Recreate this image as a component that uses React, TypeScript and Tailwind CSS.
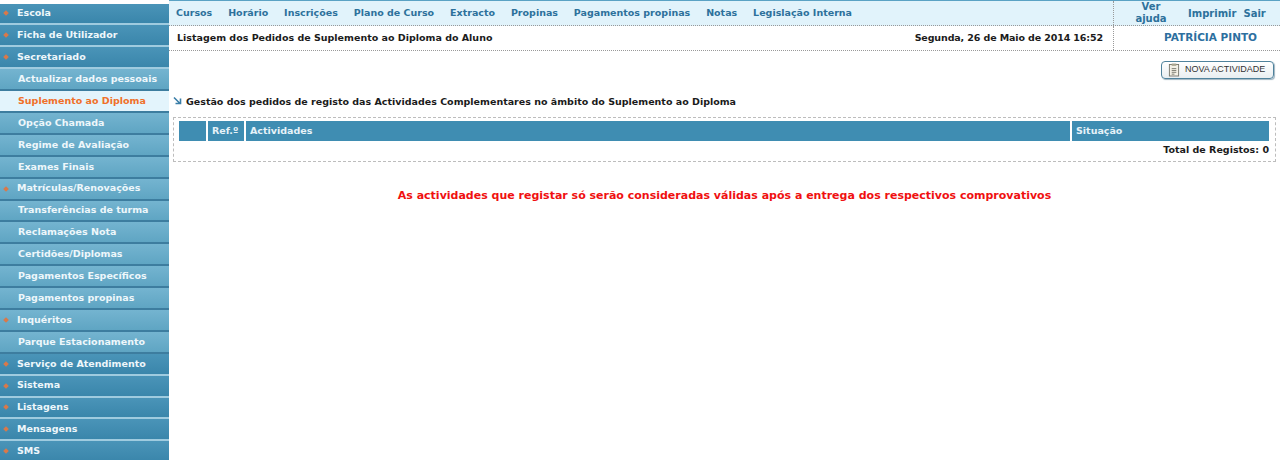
const MENU = [
  { label: "Escola", kind: "top" },
  { label: "Ficha de Utilizador", kind: "top" },
  { label: "Secretariado", kind: "top" },
  { label: "Actualizar dados pessoais", kind: "sub" },
  { label: "Suplemento ao Diploma", kind: "active" },
  { label: "Opção Chamada", kind: "sub" },
  { label: "Regime de Avaliação", kind: "sub" },
  { label: "Exames Finais", kind: "sub" },
  { label: "Matrículas/Renovações", kind: "subarrow" },
  { label: "Transferências de turma", kind: "sub" },
  { label: "Reclamações Nota", kind: "sub" },
  { label: "Certidões/Diplomas", kind: "sub" },
  { label: "Pagamentos Específicos", kind: "sub" },
  { label: "Pagamentos propinas", kind: "sub" },
  { label: "Inquéritos", kind: "subarrow" },
  { label: "Parque Estacionamento", kind: "sub" },
  { label: "Serviço de Atendimento", kind: "top" },
  { label: "Sistema", kind: "top" },
  { label: "Listagens", kind: "top" },
  { label: "Mensagens", kind: "top" },
  { label: "SMS", kind: "top" },
];

const NAV = ["Cursos", "Horário", "Inscrições", "Plano de Curso", "Extracto", "Propinas", "Pagamentos propinas", "Notas", "Legislação Interna"];

function MenuRow({ label, kind }: { label: string; kind: string }) {
  if (kind === "active") {
    return (
      <div className="flex h-[21.9px] items-center border-b-2 border-[#3d7d9f] bg-[#e3f4fc] pl-[18px] text-[#f0702a]">
        {label}
      </div>
    );
  }
  const sub = kind !== "top";
  return (
    <div
      className={
        sub
          ? "flex h-[21.9px] items-center border-b-2 border-[#3d7d9f] bg-gradient-to-b from-[#74b4d0] to-[#5fa5c3] text-[#eef7fb]"
          : "flex h-[21.9px] items-center border-b-2 border-[#9fcbdf] bg-gradient-to-b from-[#4a94b8] to-[#3a86ab] text-[#eef7fb]"
      }
    >
      {kind === "sub" ? (
        <span className="pl-[18px]">{label}</span>
      ) : (
        <>
          <span className="ml-[4px] mr-[9px] h-[4px] w-[4px] shrink-0 rotate-45 bg-[#d9794a]" />
          <span>{label}</span>
        </>
      )}
    </div>
  );
}

export default function App() {
  return (
    <div className="flex h-[460px] w-[1280px] overflow-hidden bg-white font-['DejaVu_Sans',sans-serif] text-[9.5px] font-bold text-[#1b1b1b]">
      <aside className="w-[169px] shrink-0 bg-white pt-[3.5px]">
        {MENU.map((m) => (
          <MenuRow key={m.label} label={m.label} kind={m.kind} />
        ))}
      </aside>

      <main className="min-w-0 flex-1">
        <div className="flex h-[26px] border-b border-t border-b-[#999] border-t-[#5aa2c4] bg-[#e1f3fb] text-[#2d719b] [border-bottom-style:dotted]">
          <nav className="flex flex-1 items-center gap-[15.9px] pl-[7px] pt-[1px]">
            {NAV.map((n) => (
              <span key={n}>{n}</span>
            ))}
          </nav>
          <div className="flex w-[167px] items-center border-l border-dotted border-[#999] text-[10px]">
            <span className="w-[74px] text-center leading-[12px]">
              Ver
              <br />
              ajuda
            </span>
            <span>Imprimir</span>
            <span className="ml-[7px]">Sair</span>
          </div>
        </div>

        <div className="flex h-[25px] border-b border-dotted border-[#999]">
          <div className="flex flex-1 items-center justify-between pl-[8px] pr-[10px]">
            <span>Listagem dos Pedidos de Suplemento ao Diploma do Aluno</span>
            <span className="tracking-[-0.12px]">Segunda, 26 de Maio de 2014 16:52</span>
          </div>
          <div className="flex w-[167px] items-center justify-center border-l border-dotted border-[#999] pl-[27px] text-[10.5px] text-[#2d6f9f]">
            PATRÍCIA PINTO
          </div>
        </div>

        <div className="flex justify-end pr-[6px] pt-[10px]">
          <button className="flex h-[18px] w-[113px] items-center whitespace-nowrap rounded-[4px] border border-[#4f829c] bg-gradient-to-b from-white to-[#e9eef1] pl-[6px] font-['Liberation_Sans',sans-serif] text-[9px] font-normal text-[#333] shadow-[1px_1px_1px_#9fb4c0]">
            <svg width="12" height="14" viewBox="0 0 13 15" className="mr-[5px] shrink-0">
              <rect x="1.5" y="1.5" width="10" height="12.5" fill="#f4f1e6" stroke="#77766c" />
              <rect x="4" y="0.5" width="5" height="2.5" fill="#a9a58f" />
              <path d="M4 6h5M4 8h5M4 10h5M4 12h3" stroke="#77766c" strokeWidth="1" />
            </svg>
            NOVA ACTIVIDADE
          </button>
        </div>

        <div className="flex items-center pl-[4px] pt-[16px]">
          <svg width="9" height="9" viewBox="0 0 9 9" className="mb-[3px] mr-[4px]">
            <path d="M1 1.5 7 7.5M7.5 2.5V7.5H2.5" fill="none" stroke="#3a7ea8" strokeWidth="1.6" />
          </svg>
          <span>Gestão dos pedidos de registo das Actividades Complementares no âmbito do Suplemento ao Diploma</span>
        </div>

        <div className="ml-[4px] mr-[4px] mt-[8px] h-[45px] border border-dashed border-[#bdbdbd] px-[5px] pt-[3px]">
          <div className="flex h-[20px] gap-[2px] text-[#e6f2f8]">
            <div className="w-[27px] bg-[#3f8db2]" />
            <div className="flex w-[36px] items-center bg-[#3f8db2] pl-[4px]">Ref.º</div>
            <div className="flex w-[824px] items-center bg-[#3f8db2] pl-[4px]">Actividades</div>
            <div className="flex w-[197px] items-center bg-[#3f8db2] pl-[4px]">Situação</div>
          </div>
          <div className="pr-[1px] pt-[2px] text-right leading-[14px]">Total de Registos: 0</div>
        </div>

        <p className="mt-[26px] text-center text-[11px] text-[#f01010]">
          As actividades que registar só serão consideradas válidas após a entrega dos respectivos comprovativos
        </p>
      </main>
    </div>
  );
}
